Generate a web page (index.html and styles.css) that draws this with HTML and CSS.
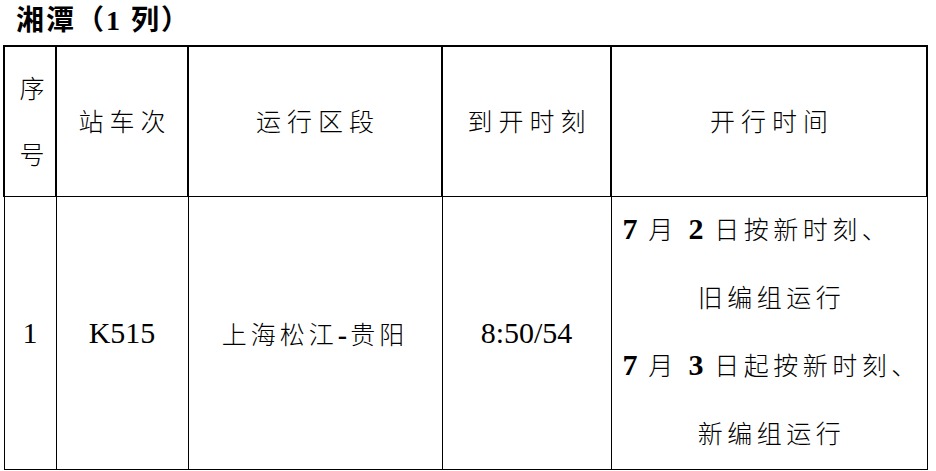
FILE: index.html
```html
<!DOCTYPE html>
<html lang="zh-CN">
<head>
<meta charset="utf-8">
<title>湘潭（1列）</title>
<link rel="stylesheet" href="styles.css">
</head>
<body>
<div class="page">
  <h1 class="title">湘潭（<span class="num">1</span> 列）</h1>
  <table class="schedule">
    <colgroup>
      <col class="col-no">
      <col class="col-train">
      <col class="col-route">
      <col class="col-time">
      <col class="col-note">
    </colgroup>
    <tr class="head">
      <th class="stack">序<br>号</th>
      <th>站车次</th>
      <th>运行区段</th>
      <th>到开时刻</th>
      <th>开行时间</th>
    </tr>
    <tr class="row">
      <td class="latin">1</td>
      <td class="latin">K515</td>
      <td class="cjk">上海松江<span class="dash">-</span>贵阳</td>
      <td class="latin">8:50/54</td>
      <td class="notes">
        <div class="line first"><b class="d">7</b> 月 <b class="d">2</b> 日按新时刻、</div>
        <div class="line">旧编组运行</div>
        <div class="line first"><b class="d">7</b> 月 <b class="d">3</b> 日起按新时刻、</div>
        <div class="line">新编组运行</div>
      </td>
    </tr>
  </table>
</div>
</body>
</html>
```
FILE: styles.css
```css
html, body {
  margin: 0;
  padding: 0;
  background: #fff;
  color: #000;
}

.page {
  padding: 4px 0 0 2px;
  font-family: "Liberation Serif", "Noto Sans CJK SC", serif;
}

.title {
  margin: 0 0 7px 14px;
  font-size: 28px;
  line-height: 34px;
  font-weight: 700;
  letter-spacing: 2px;
  font-family: "Liberation Serif", "Noto Sans CJK SC", serif;
}

.title .num {
  font-family: "Liberation Serif", serif;
  font-weight: 700;
}

.schedule {
  border-collapse: collapse;
  table-layout: fixed;
  width: 923px;
  margin-left: 1px;
}

.col-no { width: 52px; }
.col-train { width: 132px; }
.col-route { width: 254px; }
.col-time { width: 169px; }
.col-note { width: 316px; }

.schedule th,
.schedule td {
  padding: 0;
  text-align: center;
  vertical-align: middle;
  color: #000;
}

.head th {
  height: 146px;
  font-weight: 300;
  font-size: 25px;
  letter-spacing: 6px;
  padding-left: 6px;
  padding-top: 3px;
  line-height: 30px;
  border-top: 2px solid #000;
  border-left: 2px solid #000;
  border-right: 2px solid #000;
  border-bottom: 1px solid #000;
}

.head th.stack {
  line-height: 66px;
  padding-left: 4px;
  letter-spacing: 0;
}

.row td {
  height: 271px;
  border: 1px solid #000;
}

.latin {
  font-size: 30px;
  line-height: 34px;
}

.cjk {
  font-size: 25px;
  font-weight: 300;
  letter-spacing: 4px;
  padding-left: 4px;
}

.dash {
  font-weight: 700;
  font-size: 28px;
  letter-spacing: 3px;
  line-height: 1;
}

.notes {
  font-size: 25px;
  font-weight: 300;
  letter-spacing: 4.5px;
}

.notes .line {
  line-height: 68px;
  height: 68px;
  text-align: center;
  padding-left: 5px;
  white-space: nowrap;
}

.notes .line.first {
  text-align: left;
  padding-left: 11px;
}

.notes .d {
  font-size: 30px;
  font-weight: 700;
  letter-spacing: 0;
  line-height: 1;
}
```
